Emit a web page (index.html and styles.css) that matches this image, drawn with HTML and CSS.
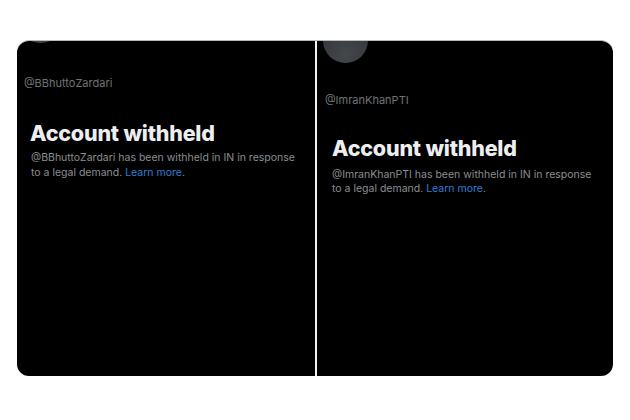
FILE: index.html
```html
<!DOCTYPE html>
<html lang="en">
<head>
<meta charset="utf-8">
<title>Account withheld</title>
<link rel="stylesheet" href="styles.css">
</head>
<body>
  <div class="frame">
    <section class="panel panel-left">
      <div class="avatar"></div>
      <div class="handle">@BBhuttoZardari</div>
      <h1 class="title">Account withheld</h1>
      <p class="body">@BBhuttoZardari has been withheld in IN in response to a legal demand. <span class="link">Learn more</span>.</p>
    </section>
    <section class="panel panel-right">
      <div class="avatar"></div>
      <div class="handle">@ImranKhanPTI</div>
      <h1 class="title">Account withheld</h1>
      <p class="body">@ImranKhanPTI has been withheld in IN in response to a legal demand. <span class="link">Learn more</span>.</p>
    </section>
  </div>
</body>
</html>
```

FILE: styles.css
```css
html, body {
  margin: 0;
  padding: 0;
  background: #ffffff;
  width: 630px;
  height: 420px;
  overflow: hidden;
}

.frame {
  margin: 41px 17px 0 17px;
  width: 596px;
  height: 335px;
  display: grid;
  grid-template-columns: 298px 296px;
  column-gap: 2px;
  background: #f2f2f2;
  border-radius: 12px;
  overflow: hidden;
  box-shadow: 0 -1px 0 #b9b9b9;
  font-family: Inter, "Noto Sans", sans-serif;
}

.panel {
  background: #000000;
  overflow: hidden;
  color: #e7e9ea;
}

.avatar {
  width: 45px;
  height: 45px;
  border-radius: 50%;
  background: radial-gradient(circle at 50% 80%, #44474b, #2e3033);
}

.panel-left .avatar {
  margin: -43px 0 0 1px;
}

.panel-right .avatar {
  margin: -23px 0 0 6px;
}

.handle {
  font-size: 11px;
  color: #6e7377;
  line-height: 13px;
}

.panel-left .handle {
  margin: 34px 0 0 7px;
}

.panel-right .handle {
  margin: 31px 0 0 8px;
}

.title {
  margin: 0;
  font-size: 21.5px;
  font-weight: 800;
  letter-spacing: -0.2px;
  line-height: 24px;
  color: #eceeef;
}

.panel-left .title {
  margin: 31px 0 0 13px;
}

.panel-right .title {
  margin: 29px 0 0 15px;
}

.body {
  margin: 0;
  font-size: 10.5px;
  line-height: 15px;
  color: #8a8e92;
}

.panel-left .body {
  margin: 5px 0 0 14px;
  width: 272px;
}

.panel-right .body {
  margin: 8px 0 0 15px;
  width: 268px;
  line-height: 14px;
}

.link {
  color: #2f7fd6;
}
```
